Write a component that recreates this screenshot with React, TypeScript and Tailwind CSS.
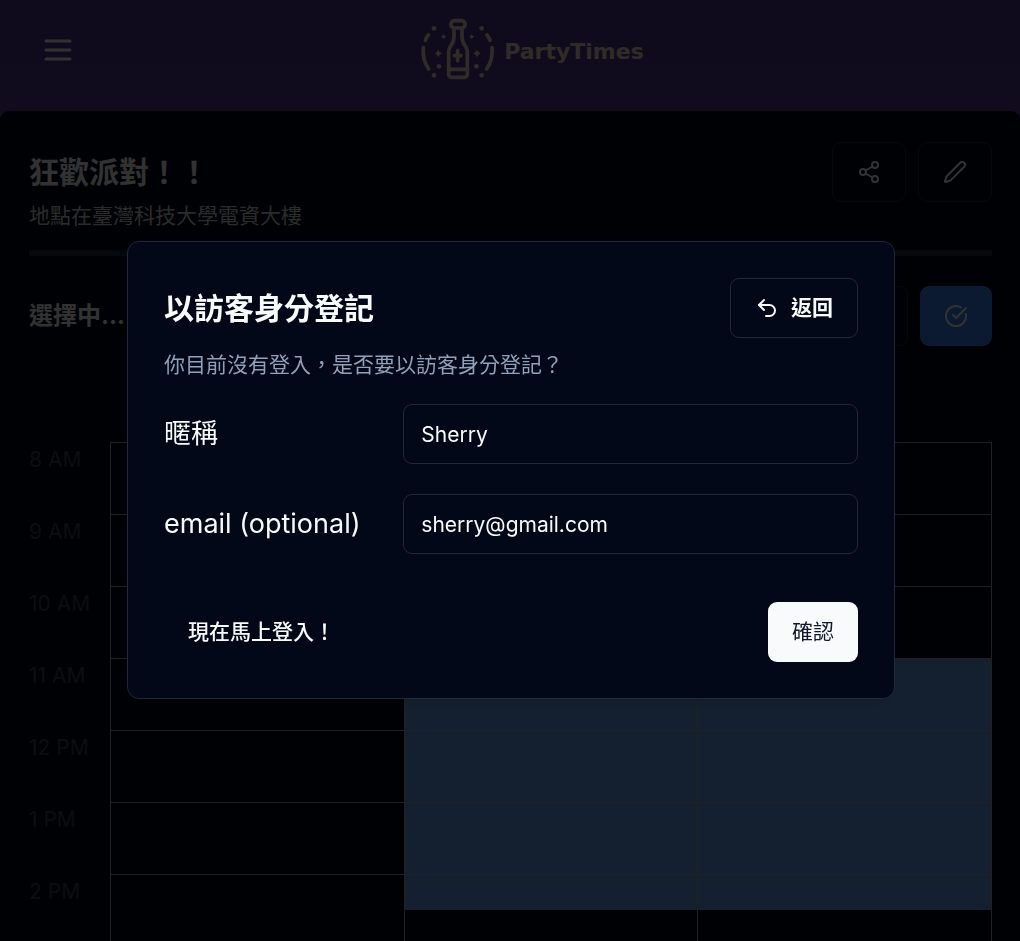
import type { ReactNode } from "react";
import { CircleCheckBig, Pen, Share2, Undo2 } from "lucide-react";

const hours = ["8 AM", "9 AM", "10 AM", "11 AM", "12 PM", "1 PM", "2 PM"];

type Fill = "none" | "full" | "half";

function fillOf(row: number, day: number): Fill {
  if (day === 0 || row < 3 || row > 6) return "none";
  return row === 6 ? "half" : "full";
}

function Logo() {
  return (
    <svg
      viewBox="0 0 252 216"
      className="h-[72px] w-[84px]"
      fill="none"
      stroke="currentColor"
      strokeWidth="11"
      strokeLinecap="round"
      strokeLinejoin="round"
      aria-hidden="true"
    >
      <rect x="105" y="20" width="42" height="22" rx="10" />
      <path d="M114 44v24c0 13-4 20-10 28-4 6-6 10-6 18v66c0 6 4 10 10 10h36c6 0 10-4 10-10v-66c0-8-2-12-6-18-6-8-10-15-10-28V44" />
      <path d="M98 166h56" />
      <path d="M125 110v30M115 125h20" />
      <path d="M22 101c-2 24 3 46 16 64M228 101c2 24-3 46-16 64" />
      <path d="M37 63c-4 5-7 10-9 16M213 63c4 5 7 10 9 16" />
      <g fill="currentColor" stroke="none">
        <circle cx="54" cy="43" r="7" />
        <circle cx="197" cy="43" r="7" />
        <circle cx="69" cy="157" r="7" />
        <circle cx="181" cy="157" r="7" />
        <circle cx="54" cy="184" r="7" />
        <circle cx="197" cy="184" r="7" />
        <path d="M83 60l3 5 5 3-5 3-3 4-3-4-5-3 5-3zM167 60l3 5 5 3-5 3-3 4-3-4-5-3 5-3z" />
        <path d="M67 107l4 7 7 4-7 4-4 8-4-8-7-4 7-4zM183 107l4 7 7 4-7 4-4 8-4-8-7-4 7-4z" />
      </g>
    </svg>
  );
}

function OutlineButton({ label, children }: { label: string; children?: ReactNode }) {
  return (
    <button
      type="button"
      aria-label={label}
      className="flex h-[60px] items-center justify-center gap-3 rounded-[9px] border border-slate-800 px-6"
    >
      {children}
    </button>
  );
}

function Field({ id, label, type, value }: { id: string; label: string; type: string; value: string }) {
  return (
    <div className="grid grid-cols-3 items-center gap-6">
      <label htmlFor={id} className="text-[27px] leading-9 whitespace-nowrap">
        {label}
      </label>
      <input
        id={id}
        type={type}
        defaultValue={value}
        className="col-span-2 h-[60px] w-full rounded-[9px] border border-slate-800 bg-transparent px-[17px] text-[21px] outline-none"
      />
    </div>
  );
}

function Schedule() {
  return (
    <table className="mt-24 w-full table-fixed border-separate border-spacing-0">
      <tbody>
        {hours.map((hour, row) => (
          <tr key={hour} className="h-[72px]">
            <th
              scope="row"
              className="w-[82px] border-r border-[#a3a3ab] p-0 pt-0.5 text-left align-top text-[21px] leading-8 font-normal text-[#3d4047]"
            >
              {hour}
            </th>
            {[0, 1, 2].map((day) => {
              const fill = fillOf(row, day);
              return (
                <td
                  key={day}
                  className={
                    fill === "full"
                      ? "border-t border-r border-[#a3a3ab] bg-[#66a0ee] p-0"
                      : "border-t border-r border-[#a3a3ab] p-0 align-top"
                  }
                >
                  {fill === "half" && <div className="h-[35px] bg-[#66a0ee]" />}
                </td>
              );
            })}
          </tr>
        ))}
      </tbody>
    </table>
  );
}

export default function App() {
  return (
    <div className="h-screen overflow-hidden bg-linear-to-b from-[#4c3a8c] to-[#543890] to-[111px] font-[Inter,'Noto_Sans_CJK_TC',sans-serif] text-slate-50">
      <header className="grid grid-cols-[1fr_auto_1fr] items-center pt-3.5 pb-[25px] pl-10">
        <button type="button" aria-label="選單" className="w-9">
          <svg viewBox="0 0 24 24" className="size-9" fill="none" stroke="currentColor" strokeWidth="2" strokeLinecap="round">
            <path d="M4 6h16M4 12h16M4 18h16" />
          </svg>
        </button>
        <div className="flex items-center gap-1 text-[#e8dcc4]">
          <Logo />
          <span className="pt-1 font-['DejaVu_Sans',sans-serif] text-[22px] leading-6 font-bold">PartyTimes</span>
        </div>
      </header>

      <main className="min-h-screen rounded-t-[9px] bg-[#020817] pt-[31px] pr-7 pl-[29px]">
        <div className="flex items-start justify-between">
          <div>
            <h1 className="mt-2.5 text-[30px] leading-10 font-bold">狂歡派對！！</h1>
            <p className="mt-2 text-[21px] leading-8 text-neutral-300">地點在臺灣科技大學電資大樓</p>
          </div>
          <div className="flex gap-3">
            <OutlineButton label="分享">
              <Share2 className="size-6" />
            </OutlineButton>
            <OutlineButton label="編輯">
              <Pen className="size-6" />
            </OutlineButton>
          </div>
        </div>

        <hr className="mt-[18px] h-1.5 border-0 bg-slate-800" />

        <div className="mt-[30px] flex items-center justify-between">
          <h2 className="text-2xl font-bold">選擇中...</h2>
          <div className="flex gap-3">
            <OutlineButton label="取消" />
            <button
              type="button"
              aria-label="完成"
              className="flex h-[60px] items-center justify-center rounded-[9px] bg-[#3b82f6] px-6"
            >
              <CircleCheckBig className="size-6" />
            </button>
          </div>
        </div>

        <Schedule />
      </main>

      <div className="fixed inset-0 flex items-center justify-center bg-black/80 pb-px pl-0.5">
        <div
          role="dialog"
          aria-modal="true"
          aria-labelledby="guest-title"
          aria-describedby="guest-description"
          className="w-full max-w-3xl rounded-xl border border-slate-800 bg-[#020817] p-9 shadow-lg"
        >
          <div className="flex items-center justify-between">
            <h2 id="guest-title" className="text-[30px] leading-10 font-bold">
              以訪客身分登記
            </h2>
            <OutlineButton label="返回">
              <Undo2 className="size-6" />
              <span className="text-[21px] leading-8 font-bold">返回</span>
            </OutlineButton>
          </div>
          <p id="guest-description" className="mt-3 text-[21px] leading-[30px] text-slate-400">
            你目前沒有登入，是否要以訪客身分登記？
          </p>
          <form className="mt-6" onSubmit={(event) => event.preventDefault()}>
            <div className="flex flex-col gap-[30px]">
              <Field id="nickname" label="暱稱" type="text" value="Sherry" />
              <Field id="email" label="email (optional)" type="email" value="sherry@gmail.com" />
            </div>
            <div className="mt-12 flex justify-between">
              <button type="button" className="h-[60px] rounded-[9px] px-6 text-[21px] font-medium">
                現在馬上登入！
              </button>
              <button type="submit" className="h-[60px] rounded-[9px] bg-slate-50 px-6 text-[21px] text-slate-900">
                確認
              </button>
            </div>
          </form>
        </div>
      </div>
    </div>
  );
}
